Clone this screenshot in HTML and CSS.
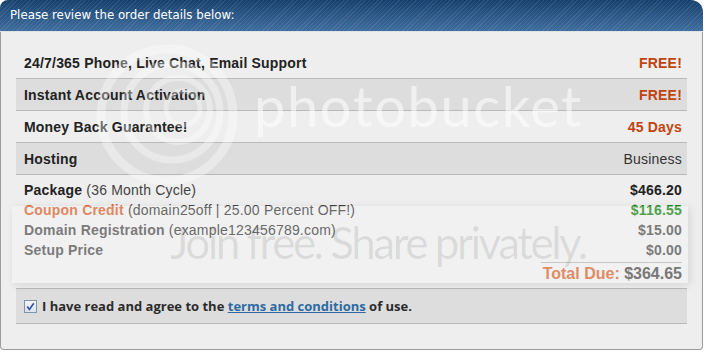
FILE: index.html
```html
<!DOCTYPE html>
<html>
<head>
<meta charset="utf-8">
<link rel="stylesheet" href="styles.css">
</head>
<body>
<div class="panel">
  <div class="panel-head">Please review the order details below:</div>
  <div class="panel-body">
    <div class="features">
      <div class="feat">
        <span class="feat-name">24/7/365 Phone, Live Chat, Email Support</span>
        <span class="feat-val hot">FREE!</span>
      </div>
      <div class="feat alt">
        <span class="feat-name">Instant Account Activation</span>
        <span class="feat-val hot">FREE!</span>
      </div>
      <div class="feat">
        <span class="feat-name">Money Back Guarantee!</span>
        <span class="feat-val hot">45 Days</span>
      </div>
      <div class="feat alt">
        <span class="feat-name">Hosting</span>
        <span class="feat-val plain">Business</span>
      </div>
      <div class="summary">
        <div class="line">
          <span><b class="lbl dark">Package</b> (36 Month Cycle)</span>
          <b class="amt dark">$466.20</b>
        </div>
        <div class="line">
          <span><b class="lbl orange">Coupon Credit</b> (domain25off | 25.00 Percent OFF!)</span>
          <b class="amt green">$116.55</b>
        </div>
        <div class="line">
          <span><b class="lbl grey">Domain Registration</b> (example123456789.com)</span>
          <b class="amt grey">$15.00</b>
        </div>
        <div class="line">
          <span><b class="lbl grey">Setup Price</b></span>
          <b class="amt grey">$0.00</b>
        </div>
        <div class="total-wrap">
          <div class="total"><span class="total-lbl">Total Due:</span> <span class="total-amt">$364.65</span></div>
        </div>
      </div>
    </div>
    <label class="agree">
      <span class="check"><svg width="9" height="9" viewBox="0 0 9 9"><path d="M1.2 4.6 L3.4 7.4 L7.8 1.2" fill="none" stroke="#2b4fa8" stroke-width="1.6"/></svg></span>
      <span>I have read and agree to the <a href="#" class="terms">terms and conditions</a> of use.</span>
    </label>
  </div>
  <div class="watermark" aria-hidden="true">
    <svg class="wm-logo" width="150" height="150" viewBox="0 0 150 150">
      <g fill="none" stroke="rgba(255,255,255,0.35)">
        <circle cx="75" cy="75" r="66" stroke-width="9"/>
        <circle cx="80" cy="72" r="48" stroke-width="7"/>
        <circle cx="86" cy="70" r="32" stroke-width="6"/>
        <circle cx="91" cy="68" r="17" stroke-width="5"/>
      </g>
    </svg>
    <div class="wm-word">photobucket</div>
    <div class="wm-band"><span class="wm-join">Join free. Share privately.</span></div>
  </div>
</div>
</body>
</html>
```
FILE: styles.css
```css
html, body {
  margin: 0;
  padding: 0;
  background: #ffffff;
}
.panel {
  position: relative;
  width: 703px;
  font-family: "Liberation Sans", Arial, sans-serif;
  overflow: hidden;
}
.panel-head {
  height: 31px;
  line-height: 31px;
  padding-left: 10px;
  border-radius: 8px 12px 0 0;
  color: #ffffff;
  font-family: "DejaVu Sans", sans-serif;
  font-size: 11.8px;
  background:
    repeating-linear-gradient(135deg, rgba(255,255,255,0.09) 0 1px, rgba(255,255,255,0) 1px 3px),
    linear-gradient(#15406d, #3e6d9d);
  border-bottom: 1px solid #dfe3e6;
}
.panel-body {
  background: #eeeeee;
  border: 1px solid #9c9c9c;
  border-top: 0;
  border-radius: 0 0 4px 4px;
  padding: 15px 15px 25px 15px;
}
.feat {
  display: flex;
  justify-content: space-between;
  align-items: center;
  height: 31px;
  padding: 0 5px 0 8px;
  border-bottom: 1px solid #b9b9b9;
  font-size: 14px;
  letter-spacing: 0.2px;
  font-weight: bold;
  color: #222222;
}
.feat.alt {
  background: #dddddd;
}
.hot {
  color: #c1440e;
}
.plain {
  font-weight: normal;
  color: #333333;
}
.summary {
  padding: 5px 5px 4px 8px;
  font-size: 14px;
  letter-spacing: 0.2px;
  color: #444444;
}
.line {
  display: flex;
  justify-content: space-between;
  line-height: 20px;
}
.dark { color: #222222; }
.orange { color: #d8693a; }
.grey { color: #5a5a5a; }
.green { color: #1e8a1e; }
.total-wrap {
  display: flex;
  justify-content: flex-end;
  margin-top: 2px;
}
.total {
  width: 141px;
  text-align: right;
  border-top: 1px solid #b9b9b9;
  line-height: 21px;
  font-size: 16px;
  letter-spacing: 0;
  font-weight: bold;
}
.total-lbl { color: #d8703e; }
.total-amt { color: #555555; }
.agree {
  display: flex;
  align-items: center;
  gap: 5px;
  height: 34px;
  padding-left: 8px;
  background: #dddddd;
  border-top: 1px solid #b9b9b9;
  border-bottom: 1px solid #b9b9b9;
  font-family: "Open Sans", sans-serif;
  font-size: 13px;
  font-weight: bold;
  color: #2b2b2b;
}
.check {
  display: flex;
  align-items: center;
  justify-content: center;
  width: 11px;
  height: 11px;
  border: 1px solid #8193a8;
  background: linear-gradient(#f4f6f9, #dde3ea);
}
.terms {
  color: #2d6aa3;
  text-decoration: underline;
}
.watermark {
  position: absolute;
  left: 0;
  top: 0;
  width: 703px;
  height: 352px;
  pointer-events: none;
}
.wm-logo {
  position: absolute;
  left: 92px;
  top: 40px;
}
.wm-word {
  position: absolute;
  left: 254px;
  top: 72px;
  font-family: "Lato", sans-serif;
  font-size: 56px;
  letter-spacing: 1.6px;
  color: rgba(255,255,255,0.55);
}
.wm-band {
  position: absolute;
  left: 12px;
  top: 206px;
  width: 676px;
  height: 77px;
  background: rgba(255,255,255,0.2);
  box-shadow: 2px 2px 8px rgba(0,0,0,0.1);
}
.wm-join {
  position: absolute;
  left: 158px;
  top: 10px;
  font-family: "Lato", sans-serif;
  font-size: 44px;
  letter-spacing: -2.5px;
  color: rgba(0,0,0,0.09);
  white-space: nowrap;
}
```
